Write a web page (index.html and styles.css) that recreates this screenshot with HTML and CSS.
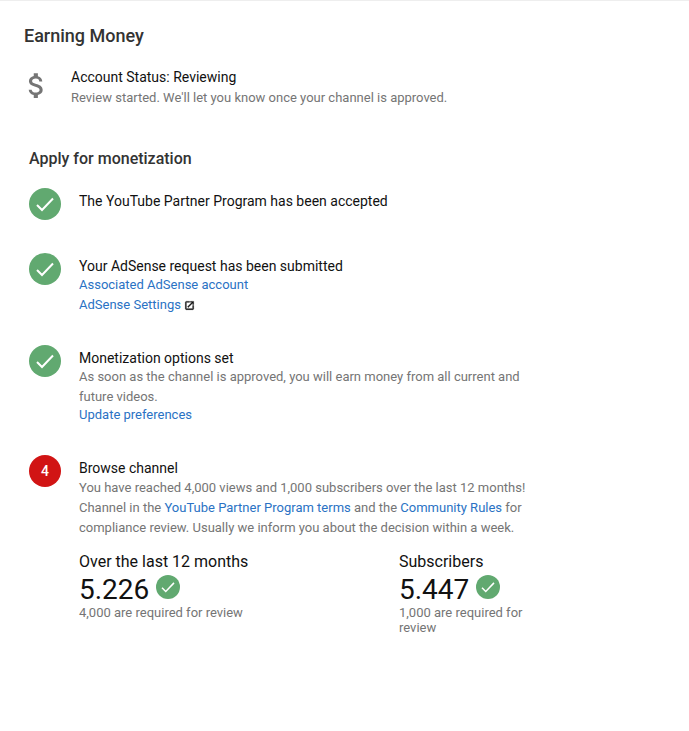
FILE: index.html
```html
<!DOCTYPE html>
<html lang="en">
<head>
  <meta charset="UTF-8">
  <title>Earning Money</title>
  <link rel="stylesheet" href="styles.css">
</head>
<body>
  <div class="page">
    <h2 class="title">Earning Money</h2>

    <div class="status">
      <div class="dollar">
        <svg viewBox="0 0 24 24" width="33" height="33"><path fill="#757575" d="M11.8 10.9c-2.27-.59-3-1.2-3-2.15 0-1.09 1.01-1.85 2.7-1.85 1.78 0 2.44.85 2.5 2.1h2.21c-.07-1.72-1.12-3.3-3.21-3.81V3h-3v2.16c-1.94.42-3.5 1.68-3.5 3.61 0 2.31 1.91 3.46 4.7 4.13 2.5.6 3 1.48 3 2.41 0 .69-.49 1.79-2.7 1.79-2.06 0-2.87-.92-2.98-2.1h-2.2c.12 2.19 1.76 3.42 3.68 3.83V21h3v-2.15c1.95-.37 3.5-1.5 3.5-3.55 0-2.84-2.43-3.81-4.7-4.4z"/></svg>
      </div>
      <div>
        <p class="status-line">Account Status: Reviewing</p>
        <p class="sub status-sub">Review started. We'll let you know once your channel is approved.</p>
      </div>
    </div>

    <h3 class="apply">Apply for monetization</h3>

    <div class="step step-first">
      <div class="badge">
        <svg viewBox="0 0 32 32" width="32" height="32"><path d="M8 17l5 5 11-11.500" fill="none" stroke="#fff" stroke-width="2"/></svg>
      </div>
      <div class="body">
        <p class="line">The YouTube Partner Program has been accepted</p>
      </div>
    </div>

    <div class="step step-adsense">
      <div class="badge">
        <svg viewBox="0 0 32 32" width="32" height="32"><path d="M8 17l5 5 11-11.500" fill="none" stroke="#fff" stroke-width="2"/></svg>
      </div>
      <div class="body">
        <p class="line">Your AdSense request has been submitted</p>
        <p class="sub"><a href="#">Associated AdSense account</a></p>
        <p class="sub"><a href="#">AdSense Settings</a>
          <svg class="ext" viewBox="0 0 24 24" width="11" height="11"><path fill="#111" stroke="#111" stroke-width="1" d="M19 19H5V5h7V3H5c-1.11 0-2 .9-2 2v14c0 1.1.89 2 2 2h14c1.100 0 2-.9 2-2v-7h-2v7zM14 3v2h3.590l-9.830 9.830 1.410 1.410L19 6.410V10h2V3h-7z"/></svg>
        </p>
      </div>
    </div>

    <div class="step step-options">
      <div class="badge">
        <svg viewBox="0 0 32 32" width="32" height="32"><path d="M8 17l5 5 11-11.500" fill="none" stroke="#fff" stroke-width="2"/></svg>
      </div>
      <div class="body">
        <p class="line">Monetization options set</p>
        <p class="sub">As soon as the channel is approved, you will earn money from all current and future videos.</p>
        <p class="sub link-row"><a href="#">Update preferences</a></p>
      </div>
    </div>

    <div class="step step-browse">
      <div class="badge badge-red">4</div>
      <div class="body">
        <p class="line">Browse channel</p>
        <p class="sub">You have reached 4,000 views and 1,000 subscribers over the last 12 months! Channel in the <a href="#">YouTube Partner Program terms</a> and the <a href="#">Community Rules</a> for compliance review. Usually we inform you about the decision within a week.</p>

        <div class="stats">
          <div class="stat">
            <div class="stat-name">Over the last 12 months</div>
            <div class="stat-row">
              <span class="stat-num">5.226</span>
              <span class="badge badge-small">
                <svg viewBox="0 0 32 32" width="24" height="24"><path d="M8 17l5 5 11-11.500" fill="none" stroke="#fff" stroke-width="2"/></svg>
              </span>
            </div>
            <div class="stat-note">4,000 are required for review</div>
          </div>
          <div class="stat">
            <div class="stat-name">Subscribers</div>
            <div class="stat-row">
              <span class="stat-num">5.447</span>
              <span class="badge badge-small">
                <svg viewBox="0 0 32 32" width="24" height="24"><path d="M8 17l5 5 11-11.500" fill="none" stroke="#fff" stroke-width="2"/></svg>
              </span>
            </div>
            <div class="stat-note">1,000 are required for review</div>
          </div>
        </div>
      </div>
    </div>
  </div>
</body>
</html>
```

FILE: styles.css
```css
* { box-sizing: border-box; margin: 0; padding: 0; }
body {
  font-family: Roboto, "Liberation Sans", sans-serif;
  background: #fff;
  color: #111;
  font-size: 14px;
}
a { color: #2a72c4; text-decoration: none; }
.page {
  border-top: 1px solid #eee;
  padding: 0 0 0 29px;
  height: 731px;
}
.title {
  font-size: 18px;
  font-weight: 500;
  line-height: 24px;
  color: #333;
  margin: 23px 0 0 -5px;
}
.status {
  display: flex;
  margin: 19px 0 0 -5px;
}
.dollar {
  flex: none;
  width: 47px;
  margin-left: -4px;
  margin-right: 4px;
  padding-top: 2px;
}
.dollar svg { display: block; }
.status-line {
  font-size: 14px;
  line-height: 20px;
  color: #111;
}
.status-sub { margin-top: 1px; }
.line {
  font-size: 14px;
  line-height: 16px;
  color: #111;
}
.sub {
  font-size: 13px;
  line-height: 20px;
  color: #757575;
}
.apply {
  font-size: 16px;
  font-weight: 500;
  line-height: 22px;
  color: #333;
  margin-top: 40px;
}
.step { display: flex; }
.step-first { margin-top: 18px; }
.step-adsense { margin-top: 33px; }
.step-options { margin-top: 30px; }
.step-browse { margin-top: 33px; }
.step-adsense .line, .step-options .line { margin-bottom: 1px; }
.step-browse .line { margin-bottom: 2px; }
.badge {
  flex: none;
  width: 32px;
  height: 32px;
  border-radius: 50%;
  background: #61a970;
  display: flex;
  align-items: center;
  justify-content: center;
}
.badge-red {
  background: #d11414;
  color: #fff;
  font-weight: 500;
  font-size: 14px;
}
.badge-small { width: 24px; height: 24px; margin-bottom: 6px; }
.body {
  width: 450px;
  margin-left: 18px;
  padding-top: 5px;
}
.link-row { line-height: 15px; }
.ext { vertical-align: -2px; }
.stats {
  display: flex;
  margin-top: 14px;
}
.stat { width: 320px; flex: none; }
.stat + .stat { width: 130px; }
.stat-name {
  font-size: 16px;
  line-height: 20px;
  color: #111;
}
.stat-row {
  display: flex;
  align-items: center;
  gap: 7px;
  height: 30px;
  margin-top: 3px;
}
.stat-num {
  font-size: 28px;
  line-height: 30px;
  color: #111;
}
.stat-note {
  font-size: 13px;
  line-height: 15px;
  color: #757575;
}
```
